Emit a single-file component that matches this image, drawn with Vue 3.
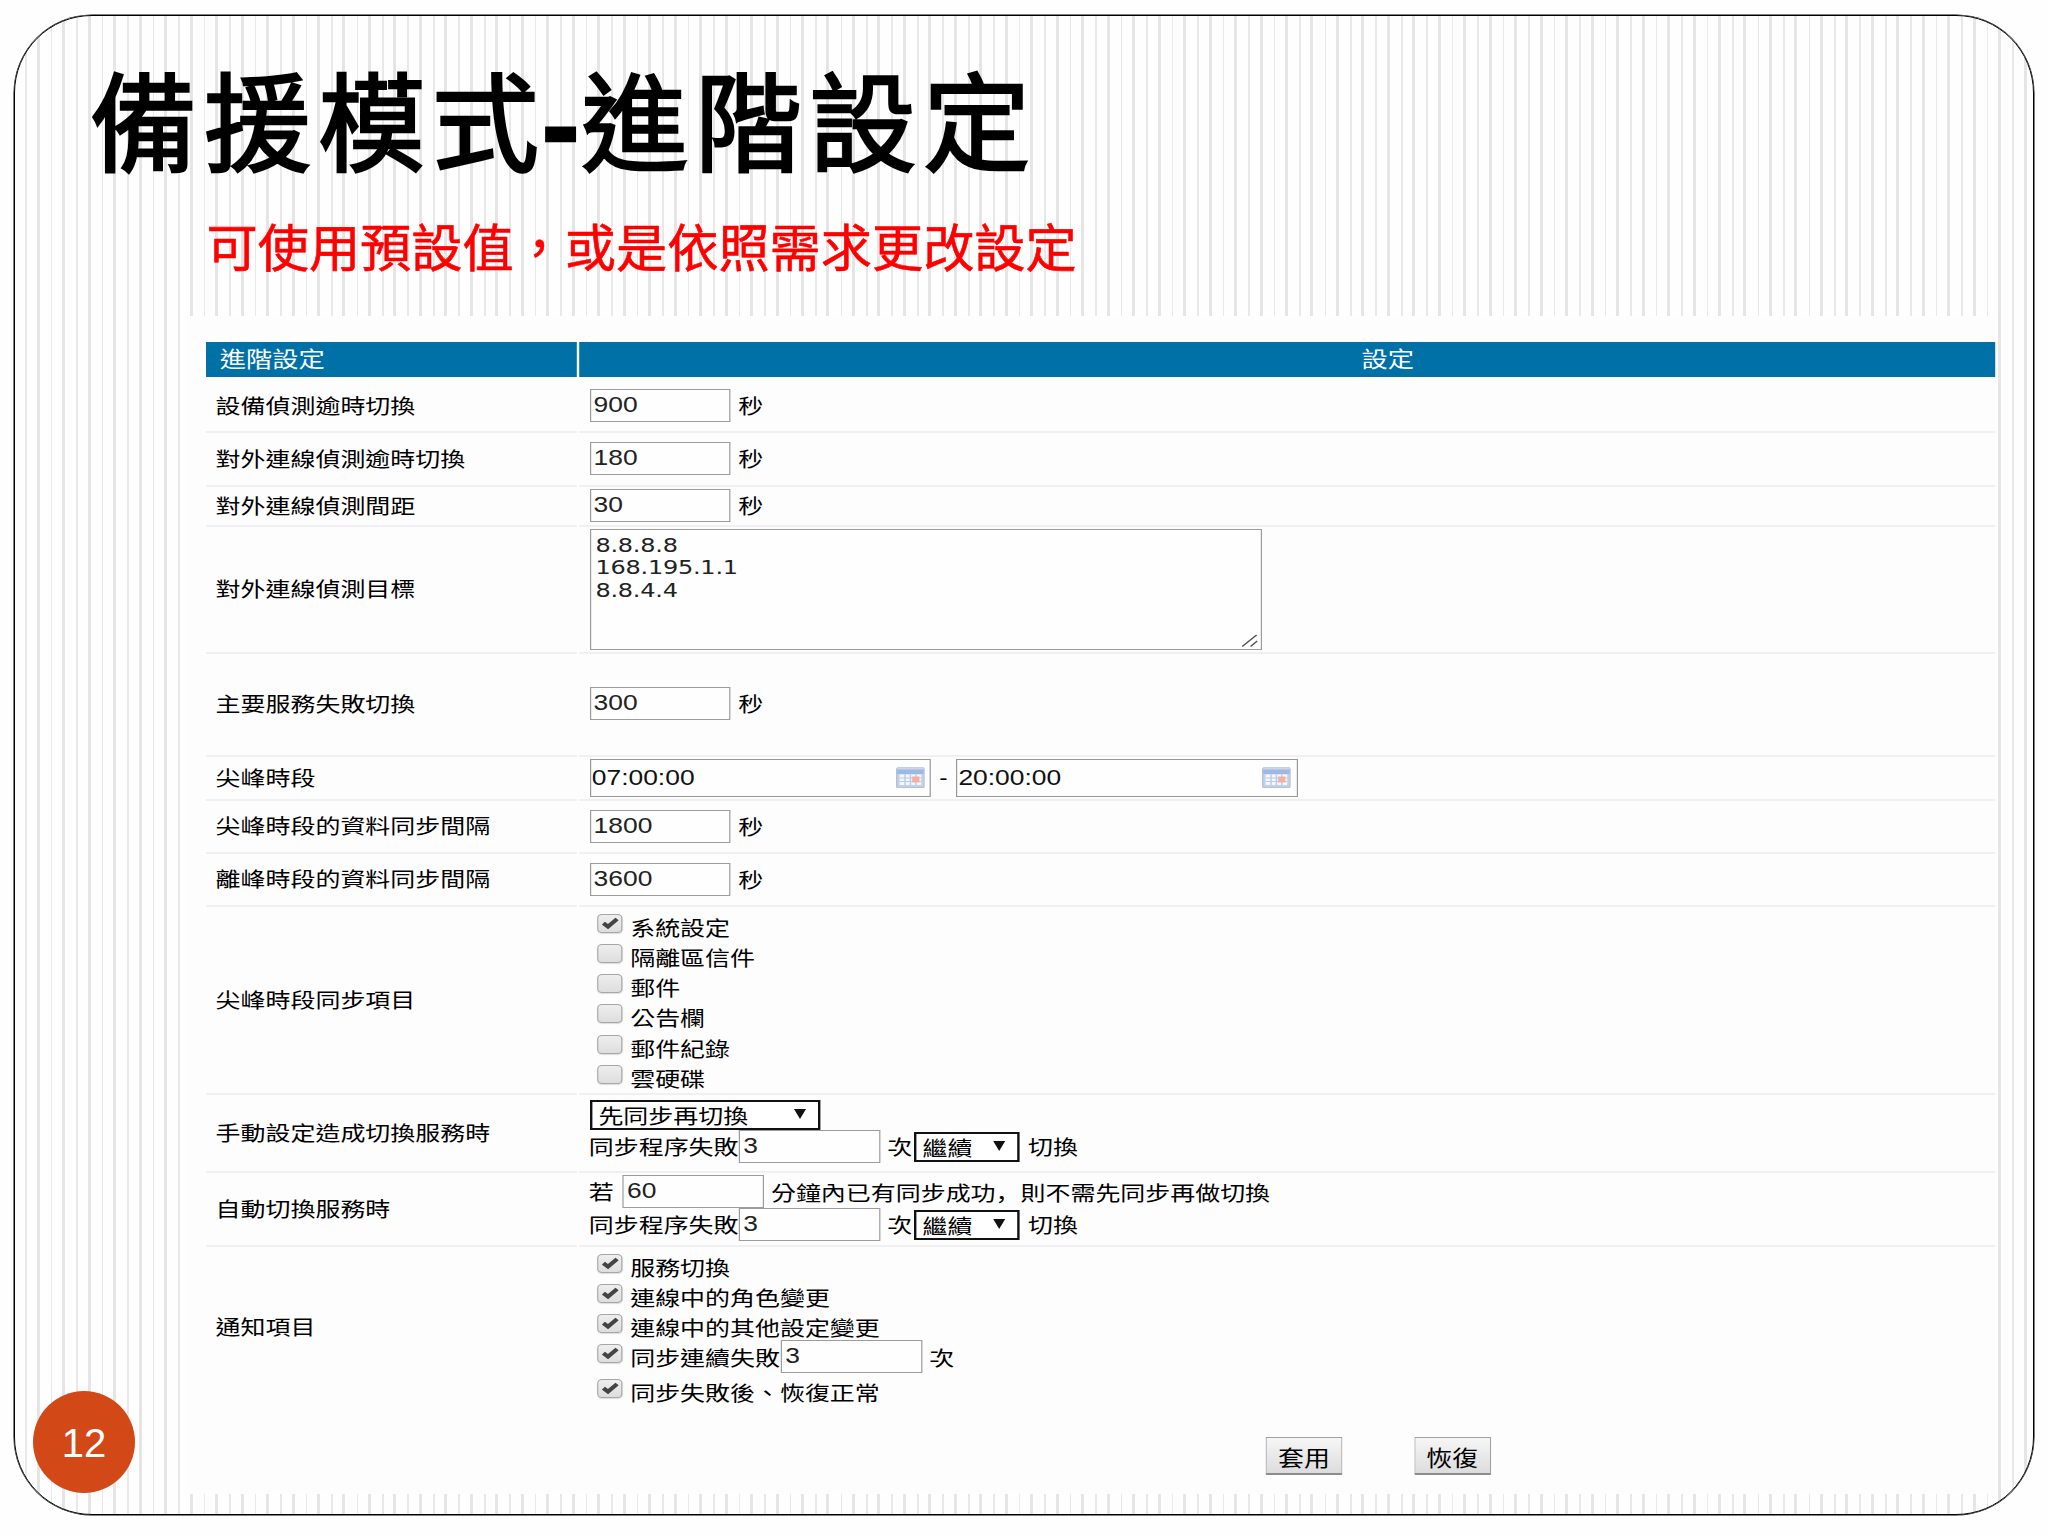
<template>
  <div class="slide">
    <div class="frame">
      <h1 class="title">備援模式<span class="hyphen">-</span>進階設定</h1>
      <p class="hint">可使用預設值，或是依照需求更改設定</p>

      <div class="panel">
        <form class="form" @submit.prevent>
          <div class="row head">
            <div class="label">進階設定</div>
            <div class="cell">設定</div>
          </div>

          <!-- simple "N seconds" rows -->
          <div v-for="f in topFields" :key="f.label" class="row" :class="f.size">
            <div class="label">{{ f.label }}</div>
            <div class="cell">
              <input v-model="f.value" type="text" class="num" />
              <span class="unit">秒</span>
            </div>
          </div>

          <div class="row targets">
            <div class="label">對外連線偵測目標</div>
            <div class="cell">
              <div class="area">
                <textarea v-model="targets" spellcheck="false"></textarea>
                <svg class="grip" width="14" height="13" viewBox="0 0 14 13">
                  <path d="M0.5 12.5 L12.5 1 M7.5 12.5 L13 7" />
                </svg>
              </div>
            </div>
          </div>

          <div class="row service">
            <div class="label">主要服務失敗切換</div>
            <div class="cell">
              <input v-model="serviceTimeout" type="text" class="num" />
              <span class="unit">秒</span>
            </div>
          </div>

          <div class="row peak">
            <div class="label">尖峰時段</div>
            <div class="cell">
              <template v-for="(t, i) in peak" :key="i">
                <span v-if="i" class="dash">-</span>
                <div class="time">
                  <input v-model="t.value" type="text" />
                  <svg class="cal" width="24" height="21" viewBox="0 0 24 21">
                    <rect x="0.5" y="1" width="23" height="19.5" rx="1" fill="#c3d0e6" stroke="#b3c0d6" />
                    <rect x="1" y="0.5" width="22" height="6.5" fill="#9db8e4" />
                    <rect x="1" y="0.5" width="22" height="2" fill="#cfd6e2" />
                    <rect x="3" y="7.5" width="18" height="10.5" fill="#f4f7fc" />
                    <path d="M7.5 7.5V18M12 7.5V18M16.5 7.5V18M3 11H21M3 14.5H21" stroke="#b9cbe6" stroke-width="1.2" />
                    <rect x="13.5" y="9.5" width="6" height="6" fill="#f3b09e" />
                  </svg>
                </div>
              </template>
            </div>
          </div>

          <div v-for="f in syncFields" :key="f.label" class="row sync">
            <div class="label">{{ f.label }}</div>
            <div class="cell">
              <input v-model="f.value" type="text" class="num" />
              <span class="unit">秒</span>
            </div>
          </div>

          <div class="row items">
            <div class="label">尖峰時段同步項目</div>
            <div class="cell list">
              <label v-for="item in syncItems" :key="item.text" class="check">
                <input v-model="item.on" type="checkbox" />
                <svg v-if="item.on" class="tick" width="14" height="13" viewBox="0 0 14 13"><path d="M1.2 6.2 L5 9.6 L12.6 2" /></svg>
                <span>{{ item.text }}</span>
              </label>
            </div>
          </div>

          <div class="row manual">
            <div class="label">手動設定造成切換服務時</div>
            <div class="cell stack">
              <div class="pick wide">
                <select><option>先同步再切換</option></select>
                <i class="arrow"></i>
              </div>
              <div class="line">
                <span>同步程序失敗</span>
                <input v-model="manualRetry" type="text" class="num" />
                <span class="times">次</span>
                <div class="pick">
                  <select><option>繼續</option></select>
                  <i class="arrow"></i>
                </div>
                <span class="tail">切換</span>
              </div>
            </div>
          </div>

          <div class="row auto">
            <div class="label">自動切換服務時</div>
            <div class="cell stack">
              <div class="line">
                <span class="if">若</span>
                <input v-model="syncedWithin" type="text" class="num" />
                <span class="times">分鐘內已有同步成功<b class="comma">，</b>則不需先同步再做切換</span>
              </div>
              <div class="line">
                <span>同步程序失敗</span>
                <input v-model="autoRetry" type="text" class="num" />
                <span class="times">次</span>
                <div class="pick">
                  <select><option>繼續</option></select>
                  <i class="arrow"></i>
                </div>
                <span class="tail">切換</span>
              </div>
            </div>
          </div>

          <div class="row notify">
            <div class="label">通知項目</div>
            <div class="cell list">
              <label v-for="item in notifyItems" :key="item.text" class="check" :class="{ tall: item.count }">
                <input v-model="item.on" type="checkbox" />
                <svg v-if="item.on" class="tick" width="14" height="13" viewBox="0 0 14 13"><path d="M1.2 6.2 L5 9.6 L12.6 2" /></svg>
                <span>{{ item.text }}</span>
                <template v-if="item.count">
                  <input v-model="item.count" type="text" class="num" />
                  <span class="times">次</span>
                </template>
              </label>
            </div>
          </div>

          <div class="actions">
            <button type="submit">套用</button>
            <button type="button">恢復</button>
          </div>
        </form>
      </div>
    </div>

    <div class="page">12</div>
  </div>
</template>

<script setup>
import { ref } from 'vue'

const topFields = ref([
  { label: '設備偵測逾時切換', value: '900', size: 'h56' },
  { label: '對外連線偵測逾時切換', value: '180', size: 'h54' },
  { label: '對外連線偵測間距', value: '30', size: 'h40' }
])
const targets = ref('8.8.8.8\n168.195.1.1\n8.8.4.4')
const serviceTimeout = ref('300')
const peak = ref([{ value: '07:00:00' }, { value: '20:00:00' }])
const syncFields = ref([
  { label: '尖峰時段的資料同步間隔', value: '1800' },
  { label: '離峰時段的資料同步間隔', value: '3600' }
])
const syncItems = ref([
  { text: '系統設定', on: true },
  { text: '隔離區信件', on: false },
  { text: '郵件', on: false },
  { text: '公告欄', on: false },
  { text: '郵件紀錄', on: false },
  { text: '雲硬碟', on: false }
])
const manualRetry = ref('3')
const syncedWithin = ref('60')
const autoRetry = ref('3')
const notifyItems = ref([
  { text: '服務切換', on: true },
  { text: '連線中的角色變更', on: true },
  { text: '連線中的其他設定變更', on: true },
  { text: '同步連續失敗', on: true, count: '3' },
  { text: '同步失敗後、恢復正常', on: true }
])
</script>

<style>
body {
  background: #fff;
}
</style>

<style scoped>
.slide {
  position: relative;
  box-sizing: border-box;
  width: 2048px;
  height: 1536px;
  padding: 15px 14px 21px;
  overflow: hidden;
  background: #fefefe;
  font-family: "Liberation Sans", "Noto Sans CJK TC", sans-serif;
}

.slide * {
  box-sizing: border-box;
}

.frame {
  width: 2020px;
  height: 1500px;
  border: 1px solid #000;
  border-radius: 78px;
  box-shadow: 0 0 0 0.5px #000;
  overflow: hidden;
  background: repeating-linear-gradient(90deg,
      #fefefe 0, #fefefe 10.4px,
      #e9e8e9 10.4px, #e9e8e9 12px,
      #fefefe 12px, #fefefe 21.8px,
      #e6e4e5 21.8px, #e6e4e5 24.8px,
      #fefefe 24.8px, #fefefe 25.473px);
}

.title {
  height: 160px;
  margin: 30px 0 0 75px;
  font-size: 107px;
  font-weight: 400;
  line-height: 160px;
  letter-spacing: 7px;
  white-space: nowrap;
  color: #000;
  -webkit-text-stroke: 2.6px #000;
}

.hyphen {
  margin: 0 2px 0 -4px;
  font-size: 112px;
  font-weight: 700;
  letter-spacing: 0;
  line-height: 1;
  -webkit-text-stroke: 2.5px #000;
}

.hint {
  height: 64px;
  margin: 12px 0 0 191.5px;
  font-size: 51.2px;
  line-height: 64px;
  white-space: nowrap;
  color: #fe0000;
  -webkit-text-stroke: 0.6px #fe0000;
}

.panel {
  width: 1810px;
  height: 1178px;
  margin: 34px 0 0 171px;
  padding: 26px 0 0 20px;
  background: #fdfdfd;
}

/* the whole form is drawn 1.2 times wider than tall */
.form {
  width: 1490.5px;
  transform: scaleX(1.2);
  transform-origin: left top;
  font-size: 20.8px;
  line-height: 30px;
  color: #000;
  white-space: nowrap;
}

.row {
  display: flex;
  gap: 2px;
}

.label,
.cell {
  display: flex;
  align-items: center;
  border-bottom: 2px solid #f0f0f2;
}

.label {
  width: 309px;
  padding: 1.5px 0 0 8px;
}

.cell {
  flex: 1;
  padding-left: 8.5px;
}

.head {
  height: 35px;
  font-size: 21.9px;
  color: #fff;
}

.head .label,
.head .cell {
  padding-top: 1px;
  border: 0;
  background: #0071a7;
}

.head .label {
  padding-left: 11.5px;
}

.head .cell {
  padding-left: 652px;
}

.h56 { height: 56px; }
.h56 .label { padding-top: 5px; }
.h56 .cell { padding-top: 3px; }
.h54 { height: 54px; }
.h54 .cell { padding-bottom: 1px; }
.h40 { height: 40px; }
.targets { height: 127px; }
.service { height: 103px; }
.service .cell { padding-bottom: 2px; }
.peak { height: 44px; }
.peak .cell { padding-bottom: 1px; }
.sync { height: 53px; }
.items { height: 188px; }
.manual { height: 78px; }
.auto { height: 74px; }
.notify { height: 160px; }

.notify .label,
.notify .cell {
  border: 0;
}

.num {
  width: 117.5px;
  height: 33px;
  margin: 0;
  padding: 0 0 1px 2.5px;
  border: 1.5px solid #9c9c9f;
  border-radius: 0;
  background: #fefefe;
  font: 22px "Liberation Sans", sans-serif;
  color: #222;
}

.row > .cell > .num {
  margin-top: -1px;
}

.unit {
  margin-left: 6.5px;
  padding-top: 2px;
}

.area {
  position: relative;
  width: 560px;
  height: 121px;
  margin-top: -1px;
}

textarea {
  display: block;
  width: 560px;
  height: 121px;
  padding: 4.5px 4px;
  border: 1.5px solid #9c9c9f;
  background: #fefefe;
  font: 20px/22.4px "DejaVu Sans", sans-serif;
  letter-spacing: -0.2px;
  color: #222;
  overflow: hidden;
  resize: none;
}

.grip {
  position: absolute;
  right: 3px;
  bottom: 3px;
  fill: none;
  stroke: #555;
  stroke-width: 1.2;
}

.time {
  display: flex;
  align-items: center;
  width: 284.5px;
  height: 38px;
  padding: 0 4.5px 0 1px;
  border: 1.5px solid #98989b;
  background: #fefefe;
}

.time input {
  flex: 1;
  min-width: 0;
  padding: 0;
  border: 0;
  background: none;
  font: 22px "Liberation Sans", sans-serif;
  color: #111;
}

.dash {
  width: 21px;
  text-align: center;
}

.list {
  flex-direction: column;
  align-items: flex-start;
  padding: 6.5px 0 0 15px;
}

.check {
  position: relative;
  display: flex;
  flex-shrink: 0;
  height: 30.3px;
  line-height: 30px;
}

.check.tall {
  height: 35px;
}

.check input[type="checkbox"] {
  appearance: none;
  width: 20.5px;
  height: 19px;
  margin: 0 7px 0 0;
  border: 1.5px solid #a6a6a6;
  border-radius: 4px;
  background: linear-gradient(#eee, #dedede);
  box-shadow: 0 1px 1px #ddd;
}

/* tick lies over the box */
.tick {
  position: absolute;
  left: 3.5px;
  top: 3px;
  fill: none;
  stroke: #444;
  stroke-width: 3.8;
}

.check .num {
  margin: -4px 0 0 1px;
}

.stack {
  flex-direction: column;
  align-items: flex-start;
}

.manual .stack {
  padding-top: 5px;
}

.auto .stack {
  padding-top: 2px;
}

.line {
  display: flex;
  flex-shrink: 0;
  align-items: center;
  height: 33px;
}

.line span {
  padding-top: 3px;
}

.line > span:first-child {
  margin-left: -0.5px;
}

.line .num {
  margin-left: 0.5px;
}

.line .if {
  margin-right: 7px;
}

.times {
  margin-left: 6px;
}

.line .times {
  margin-right: 1px;
}

/* comma sits in the lower left corner of its cell */
.comma {
  font-family: "Noto Sans CJK SC", sans-serif;
  font-weight: 400;
}

.tail {
  margin-left: 7.5px;
}

.pick {
  position: relative;
  width: 88px;
  height: 30px;
  border: 2px solid #111;
  background: #fff;
}

.pick.wide {
  flex-shrink: 0;
  width: 192px;
}

.pick select {
  display: block;
  appearance: none;
  width: 100%;
  height: 100%;
  padding: 2px 0 0 5.5px;
  border: 0;
  background: none;
  font: 20.8px/26px "Liberation Sans", "Noto Sans CJK TC", sans-serif;
  color: #000;
}

.arrow {
  position: absolute;
  right: 10px;
  top: 7px;
  border: 5px solid transparent;
  border-top: 10px solid #111;
  border-bottom: 0;
}

.actions {
  display: flex;
  gap: 59.5px;
  margin: 30px 0 0 883px;
}

button {
  width: 64px;
  height: 38px;
  padding: 2px 0 0;
  border: 1.5px solid #a0a0a0;
  border-bottom: 2px solid #8c8c8c;
  border-radius: 1px;
  background: linear-gradient(#f6f6f6, #dcdcdc);
  font: 21.6px "Liberation Sans", "Noto Sans CJK TC", sans-serif;
  color: #000;
}

/* page number badge, over the stripes */
.page {
  position: absolute;
  left: 33px;
  top: 1391px;
  width: 102px;
  height: 102px;
  border-radius: 50%;
  background: #d24817;
  font-size: 40px;
  line-height: 104px;
  text-align: center;
  color: #fff;
}
</style>
